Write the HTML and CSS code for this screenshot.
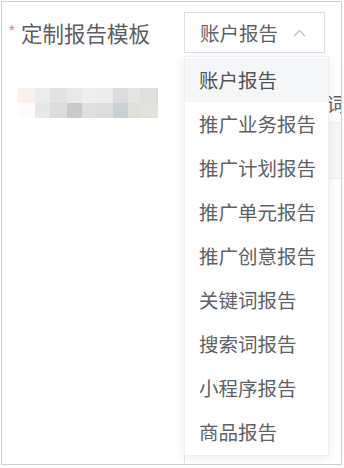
FILE: index.html
```html
<!DOCTYPE html>
<html lang="zh">
<head>
<meta charset="utf-8">
<link rel="stylesheet" href="styles.css">
</head>
<body>
<div class="frame">
  <div class="form-row">
    <span class="req">*</span>
    <span class="label">定制报告模板</span>
    <div class="select">
      <span class="select-text">账户报告</span>
      <svg class="chev" width="13" height="8" viewBox="0 0 13 8"><path d="M1 7.2 L6.5 1.5 L12 7.2" fill="none" stroke="#c0c4cc" stroke-width="1.3"/></svg>
    </div>
  </div>
  <div class="bg-row">
    <div class="mosaic">
      <i style="background:#fdf1ef"></i><i style="background:#ececec"></i><i style="background:#e1e2e2"></i><i style="background:#e9e9e9"></i><i style="background:#efefef"></i><i style="background:#ececec"></i><i style="background:#dadcde"></i><i style="background:#e5e5e3"></i><i style="background:#dfe0dd"></i>
      <i style="background:#fefbfd"></i><i style="background:#e8e8e8"></i><i style="background:#dcddd8"></i><i style="background:#c8cbc9"></i><i style="background:#dee0e3"></i><i style="background:#e0dcdd"></i><i style="background:#c9d0d3"></i><i style="background:#dfe0da"></i><i style="background:#e0e2dc"></i>
    </div>
    <div class="behind-clip"><span class="behind-text">报告词</span></div>
  </div>
  <div class="table">
    <div class="thead"></div>
    <div class="tbody"></div>
  </div>
  <ul class="dropdown">
    <li class="active">账户报告</li>
    <li>推广业务报告</li>
    <li>推广计划报告</li>
    <li>推广单元报告</li>
    <li>推广创意报告</li>
    <li>关键词报告</li>
    <li>搜索词报告</li>
    <li>小程序报告</li>
    <li>商品报告</li>
  </ul>
</div>
</body>
</html>
```

FILE: styles.css
```css
html, body {
  margin: 0;
  padding: 0;
  background: #fff;
}
body {
  font-family: "Noto Sans CJK SC", "Noto Sans", sans-serif;
  color: #606266;
}
.frame {
  position: relative;
  margin: 1px 0 0 1px;
  width: 341px;
  height: 464px;
  border: 1px solid #cfcfcf;
  box-sizing: border-box;
  overflow: hidden;
  display: flex;
  flex-direction: column;
}
.form-row {
  display: flex;
  align-items: center;
  height: 41px;
  margin-top: 10px;
  padding-left: 7px;
  flex: none;
}
.req {
  width: 12px;
  color: #f56c6c;
  font-family: "Liberation Sans", sans-serif;
  font-size: 15px;
  line-height: 1;
  align-self: center;
  margin-top: -6px;
}
.label {
  width: 163px;
  font-size: 21.5px;
  line-height: 41px;
  color: #5c5e63;
}
.select {
  width: 141px;
  height: 41px;
  box-sizing: border-box;
  border: 1px solid #dcdfe6;
  display: flex;
  align-items: center;
  padding: 0 18px 0 15px;
}
.select-text {
  flex: 1;
  font-size: 19.5px;
  color: #606266;
}
.chev {
  display: block;
  margin-top: 1px;
}
.bg-row {
  display: flex;
  align-items: center;
  margin-top: 35px;
  height: 30px;
  flex: none;
}
.mosaic {
  margin-left: 16px;
  display: grid;
  grid-template-columns: 17px 15px 17px 15px 15px 16px 15px 12px 18px;
  grid-template-rows: 15px 15px;
  flex: none;
}
.mosaic i {
  display: block;
}
.behind-clip {
  flex: 1;
  min-width: 0;
  overflow: hidden;
  display: flex;
  justify-content: flex-end;
}
.behind-text {
  font-size: 19.5px;
  color: #606266;
  white-space: nowrap;
  margin-right: -5px;
}
.table {
  margin-top: 4px;
  margin-left: 182px;
  flex: 1;
  display: flex;
  flex-direction: column;
  border-left: 1px solid #e4e4e4;
}
.thead {
  height: 55px;
  background: #f7f7f7;
  border-top: 1px solid #ebeef5;
  border-bottom: 1px solid #ebeef5;
}
.tbody {
  flex: 1;
}
.dropdown {
  position: absolute;
  left: 182px;
  top: 54px;
  width: 145px;
  margin: 0;
  padding: 1px 0;
  list-style: none;
  background: #fff;
  border: 1px solid #eeeff2;
  box-sizing: border-box;
  box-shadow: 0 2px 10px rgba(0, 0, 0, 0.08);
}
.dropdown li {
  height: 44px;
  line-height: 44px;
  padding: 0 14px;
  font-size: 19.5px;
  color: #606266;
  white-space: nowrap;
}
.dropdown li.active {
  background: #f5f6f8;
  color: #505256;
}
```
